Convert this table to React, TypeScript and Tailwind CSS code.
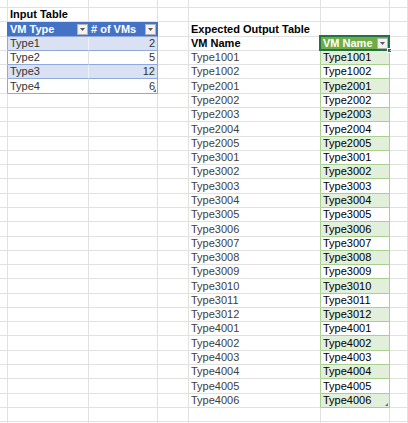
import type { ReactNode } from "react";

const output = [
  "Type1001", "Type1002",
  "Type2001", "Type2002", "Type2003", "Type2004", "Type2005",
  "Type3001", "Type3002", "Type3003", "Type3004", "Type3005", "Type3006",
  "Type3007", "Type3008", "Type3009", "Type3010", "Type3011", "Type3012",
  "Type4001", "Type4002", "Type4003", "Type4004", "Type4005", "Type4006",
];

const input = [
  { type: "Type1", count: 2 },
  { type: "Type2", count: 5 },
  { type: "Type3", count: 12 },
  { type: "Type4", count: 6 },
];

const grid = "border-r border-b border-[#e1e1e1]";

function Cell({ w, className = grid, children }: { w: string; className?: string; children?: ReactNode }) {
  return (
    <div className={`relative flex shrink-0 items-end overflow-visible whitespace-nowrap px-[2px] pb-[1px] leading-none ${w} ${className}`}>
      {children}
    </div>
  );
}

function Dropdown() {
  return (
    <span className="absolute right-[1px] bottom-[1px] flex h-[11px] w-[11px] items-center justify-center border border-[#b3b3b3] bg-[#f3f3f3]">
      <svg width="5" height="3" viewBox="0 0 5 3">
        <path d="M0 0h5L2.5 3z" fill="#595959" />
      </svg>
    </span>
  );
}

function Corner({ className }: { className: string }) {
  return (
    <svg className={`absolute ${className}`} width="3" height="3" viewBox="0 0 3 3">
      <path d="M3 0v3H0z" fill="#4472c4" />
    </svg>
  );
}

export default function App() {
  const rows: ReactNode[] = [];

  for (let r = 1; r <= 30; r++) {
    let b: ReactNode = null, c: ReactNode = null, e: ReactNode = null, f: ReactNode = null;
    let aCls = grid, bCls = grid, cCls = grid, eCls = grid, fCls = grid;

    if (r === 1) b = <span className="font-bold text-black">Input Table</span>;
    if (r === 2) {
      aCls = "border-r border-b border-r-[#4472c4] border-b-[#e1e1e1]";
      bCls = "border-b border-[#8ea9db] bg-[#4472c4]";
      cCls = "border-r border-b border-r-[#4472c4] border-b-[#8ea9db] bg-[#4472c4]";
      b = <><span className="font-bold text-white">VM Type</span><Dropdown /></>;
      c = <><span className="font-bold text-white">{"# of VMs"}</span><Dropdown /></>;
      e = <span className="font-bold text-black">Expected Output Table</span>;
    }
    const i = r - 3;
    if (i >= 0 && i < input.length) {
      const band = i % 2 === 0;
      aCls = "border-r border-b border-r-[#8ea9db] border-b-[#e1e1e1]";
      bCls = `border-r border-b ${band ? "bg-[#d9e1f2] border-r-[#eef1f9]" : "bg-white border-r-[#e1e1e1]"} border-b-[#8ea9db]`;
      cCls = `border-r border-b border-[#8ea9db] ${band ? "bg-[#d9e1f2]" : "bg-white"}`;
      b = <span className="text-[#333]">{input[i].type}</span>;
      c = (
        <>
          <span className="ml-auto text-[#333]">{input[i].count}</span>
          {i === input.length - 1 && <Corner className="right-[1px] bottom-[1px]" />}
        </>
      );
    }
    if (r === 3) {
      e = <span className="font-bold text-black">VM Name</span>;
      eCls = "border-r border-b border-r-[#a9d08e] border-b-[#e1e1e1]";
      fCls = "border-r border-b border-[#a9d08e] bg-[#70ad47]";
      f = (
        <>
          <span className="font-bold text-white">VM Name</span>
          <Dropdown />
          <span className="pointer-events-none absolute -top-[2px] -left-[2px] -right-[1px] -bottom-[1px] border-2 border-[#217346]" />
          <span className="absolute -right-[3px] -bottom-[3px] h-[5px] w-[5px] border border-white bg-[#217346]" />
        </>
      );
    }
    const o = r - 4;
    if (o >= 0 && o < output.length) {
      const band = o % 2 === 0;
      e = <span className="text-[#404040]">{output[o]}</span>;
      eCls = "border-r border-b border-r-[#a9d08e] border-b-[#e1e1e1]";
      fCls = `border-r border-b border-[#a9d08e] ${band ? "bg-[#e2efda]" : "bg-white"}`;
      f = (
        <>
          <span className="text-black">{output[o]}</span>
          {o === output.length - 1 && <Corner className="right-[1px] bottom-[1px]" />}
        </>
      );
    }

    rows.push(
      <div key={r} className={`flex ${r === 3 ? "relative z-10" : ""} h-[14.2857px]`}>
        <Cell w="w-[8px]" className={aCls} />
        <Cell w="w-[81px]" className={bCls}>{b}</Cell>
        <Cell w="w-[69px]" className={cCls}>{c}</Cell>
        <Cell w="w-[31px]" />
        <Cell w="w-[132px]" className={eCls}>{e}</Cell>
        <Cell w="w-[69px]" className={fCls}>{f}</Cell>
        <Cell w="grow" />
      </div>
    );
  }

  return (
    <div
      className="h-[423px] w-[408px] overflow-hidden bg-white text-[11px]"
      style={{ fontFamily: '"Liberation Sans", Arial, sans-serif' }}
    >
      <div className="flex h-[8px]">
        <Cell w="w-[8px]" />
        <Cell w="w-[81px]" />
        <Cell w="w-[69px]" />
        <Cell w="w-[31px]" />
        <Cell w="w-[132px]" />
        <Cell w="w-[69px]" />
        <Cell w="grow" />
      </div>
      {rows}
    </div>
  );
}
